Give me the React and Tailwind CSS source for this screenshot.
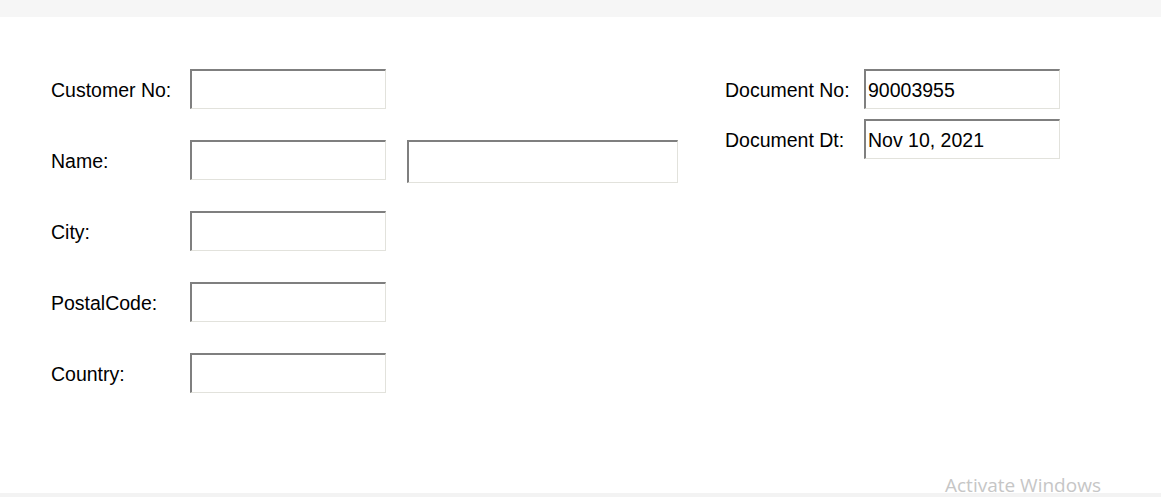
import React from "react";

const inputCls =
  "box-border h-[40px] w-[196px] border-t-2 border-l-2 border-b border-r border-t-[#7f7f7f] border-l-[#7f7f7f] border-b-[#e2e2dc] border-r-[#e2e2dc] bg-white pl-[2px] pt-[1px] text-[19.5px] text-black outline-none";

function Row({ label, children }) {
  return (
    <div className="flex h-[40px] items-start">
      <div className="flex h-[40px] w-[139px] items-center pt-[4px]">{label}</div>
      {children}
    </div>
  );
}

export default function App() {
  return (
    <div
      className="relative flex h-[497px] w-[1161px] flex-col overflow-hidden bg-white text-[19.5px] text-black"
      style={{ fontFamily: '"Liberation Sans", Arial, sans-serif' }}
    >
      <div className="h-[17px] shrink-0 bg-[#f6f6f6]" />
      <div className="flex flex-1 pl-[51px] pt-[52px]">
        <div className="grid w-[674px] grid-rows-[40px_40px_40px_40px_40px] gap-y-[31px]">
          <Row label="Customer No:">
            <input className={inputCls} />
          </Row>
          <Row label="Name:">
            <input className={inputCls} />
            <input className={inputCls + " ml-[21px] !h-[43px] !w-[271px]"} />
          </Row>
          <Row label="City:">
            <input className={inputCls} />
          </Row>
          <Row label="PostalCode:">
            <input className={inputCls} />
          </Row>
          <Row label="Country:">
            <input className={inputCls} />
          </Row>
        </div>
        <div className="flex flex-col gap-[10px]">
          <Row label="Document No:">
            <input className={inputCls} defaultValue="90003955" readOnly />
          </Row>
          <Row label="Document Dt:">
            <input className={inputCls} defaultValue="Nov 10, 2021" readOnly />
          </Row>
        </div>
      </div>
      <div className="h-[4px] shrink-0 bg-[#f3f3f3]" />
      <div
        className="absolute bottom-[2px] left-[945px] text-[19px] leading-none text-[#c6c6c6]"
        style={{ fontFamily: '"Open Sans", "Noto Sans", sans-serif' }}
      >
        Activate Windows
      </div>
    </div>
  );
}
